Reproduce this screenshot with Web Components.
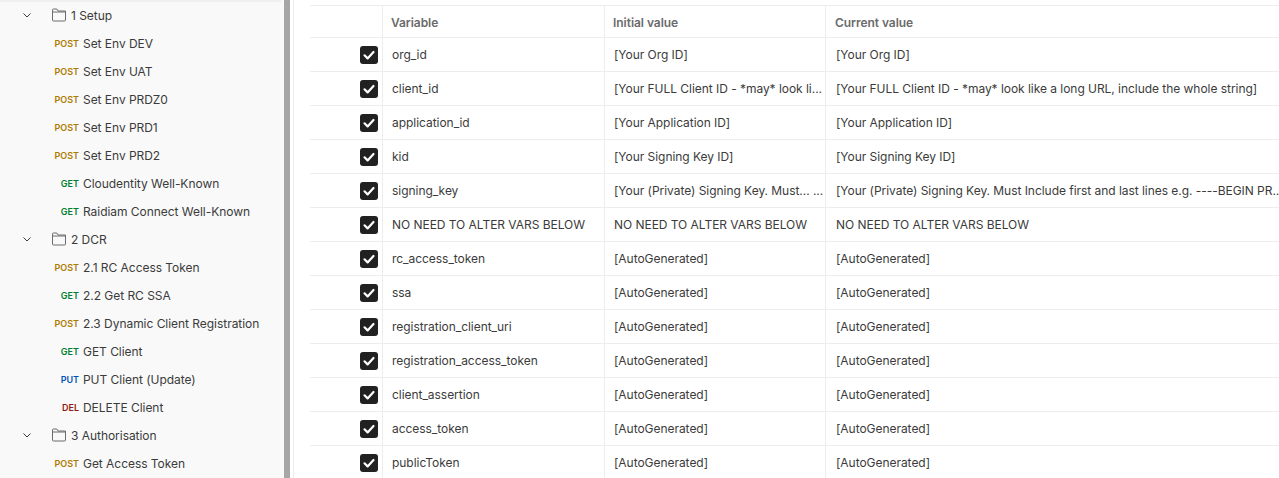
<!DOCTYPE html>
<html lang="en">
<head>
<meta charset="UTF-8">
<title>Environment</title>
<style>
  html, body { margin: 0; height: 100%; overflow: hidden; background: #fff; }
  body { font-family: Inter, "Liberation Sans", sans-serif; }
</style>
</head>
<body>
<env-page></env-page>
<script>
const sidebarItems = [
  ['folder', '1 Setup'],
  ['POST', 'Set Env DEV'],
  ['POST', 'Set Env UAT'],
  ['POST', 'Set Env PRDZ0'],
  ['POST', 'Set Env PRD1'],
  ['POST', 'Set Env PRD2'],
  ['GET', 'Cloudentity Well-Known'],
  ['GET', 'Raidiam Connect Well-Known'],
  ['folder', '2 DCR'],
  ['POST', '2.1 RC Access Token'],
  ['GET', '2.2 Get RC SSA'],
  ['POST', '2.3 Dynamic Client Registration'],
  ['GET', 'GET Client'],
  ['PUT', 'PUT Client (Update)'],
  ['DEL', 'DELETE Client'],
  ['folder', '3 Authorisation'],
  ['POST', 'Get Access Token']
];

const rows = [
  ['org_id', '[Your Org ID]', '[Your Org ID]'],
  ['client_id', '[Your FULL Client ID - *may* look li...', '[Your FULL Client ID - *may* look like a long URL, include the whole string]'],
  ['application_id', '[Your Application ID]', '[Your Application ID]'],
  ['kid', '[Your Signing Key ID]', '[Your Signing Key ID]'],
  ['signing_key', '[Your (Private) Signing Key. Must... ...', '[Your (Private) Signing Key. Must Include first and last lines e.g. ----BEGIN PR..'],
  ['NO NEED TO ALTER VARS BELOW', 'NO NEED TO ALTER VARS BELOW', 'NO NEED TO ALTER VARS BELOW'],
  ['rc_access_token', '[AutoGenerated]', '[AutoGenerated]'],
  ['ssa', '[AutoGenerated]', '[AutoGenerated]'],
  ['registration_client_uri', '[AutoGenerated]', '[AutoGenerated]'],
  ['registration_access_token', '[AutoGenerated]', '[AutoGenerated]'],
  ['client_assertion', '[AutoGenerated]', '[AutoGenerated]'],
  ['access_token', '[AutoGenerated]', '[AutoGenerated]'],
  ['publicToken', '[AutoGenerated]', '[AutoGenerated]']
];

class SideItem extends HTMLElement {
  connectedCallback() {
    const method = this.getAttribute('method');
    const colors = { POST: '#ad7a03', GET: '#007f31', PUT: '#0053b8', DEL: '#8e1a10' };
    this.attachShadow({ mode: 'open' }).innerHTML = `
      <style>
        :host { display: flex; align-items: center; height: 28px; font-size: 12px; letter-spacing: -0.04px; color: #3b3b3b; white-space: nowrap; }
        .m { width: 83px; box-sizing: border-box; padding-right: 4px; text-align: right; font-size: 9px; letter-spacing: 0; font-weight: 600; color: ${colors[method]}; }
      </style>
      <span class="m">${method}</span><slot></slot>`;
  }
}
customElements.define('side-item', SideItem);

class SideFolder extends HTMLElement {
  connectedCallback() {
    this.attachShadow({ mode: 'open' }).innerHTML = `
      <style>
        :host { display: flex; align-items: center; height: 28px; font-size: 12px; letter-spacing: -0.04px; color: #3b3b3b; white-space: nowrap; }
        svg { display: block; flex: none; }
        .chev { margin-left: 21px; }
        .dir { margin-left: 19px; margin-right: 5px; }
      </style>
      <svg class="chev" width="12" height="12" viewBox="0 0 12 12" fill="none" stroke="#3b3b3b" stroke-width="1"><path d="M2.5 4.5 6 8l3.5-3.5"/></svg>
      <svg class="dir" width="14" height="14" viewBox="0 0 14 14" fill="none" stroke="#6b6b6b" stroke-width="1"><path d="M.5 12V2A1 1 0 0 1 1.5 1h3.3l1.4 2h7.3v9a1 1 0 0 1-1 1h-11a1 1 0 0 1-1-1zM.5 4h13"/></svg>
      <slot></slot>`;
  }
}
customElements.define('side-folder', SideFolder);

class EnvSidebar extends HTMLElement {
  constructor() {
    super();
    this.attachShadow({ mode: 'open' }).innerHTML = `
      <style>
        /* the strip on top is the end of the row scrolled out of view */
        :host { display: block; flex: none; width: 284px; height: 100%; box-sizing: border-box; padding-top: 1px; overflow: hidden;
                background: #f9f9f9 linear-gradient(#f0f0f0, #f0f0f0) no-repeat 0 0 / 281px 2px; }
      </style>
      <slot></slot>`;
  }
  connectedCallback() {
    sidebarItems.forEach(([kind, label]) => {
      const el = document.createElement(kind === 'folder' ? 'side-folder' : 'side-item');
      if (kind !== 'folder') el.setAttribute('method', kind);
      el.textContent = label;
      this.appendChild(el);
    });
  }
}
customElements.define('env-sidebar', EnvSidebar);

class VarCheck extends HTMLElement {
  constructor() {
    super();
    this.attachShadow({ mode: 'open' }).innerHTML = `
      <style>
        :host { display: block; width: 18px; height: 18px; margin-top: 1px; }
        svg { display: block; }
      </style>
      <svg width="18" height="18" viewBox="0 0 18 18"><rect width="18" height="18" rx="3" fill="#212121"/><path d="M4.5 9.3 7.6 12.4 13.5 6" fill="none" stroke="#fff" stroke-width="2.2" stroke-linecap="round" stroke-linejoin="round"/></svg>`;
  }
}
customElements.define('var-check', VarCheck);

class VarRow extends HTMLElement {
  constructor() {
    super();
    this.attachShadow({ mode: 'open' }).innerHTML = `
      <style>
        :host { display: grid; grid-template-columns: 72px 222px 221px 1fr; height: 34px; border-bottom: 1px solid #ededed; box-sizing: border-box; font-size: 12px; letter-spacing: -0.04px; color: #3b3b3b; }
        div { display: flex; align-items: center; min-width: 0; box-sizing: border-box; border-left: 1px solid #ededed; padding: 0 1px 0 9px; }
        div:last-child { padding: 0 0 0 10px; }
        .box { border-left: 0; justify-content: flex-end; padding: 0 4px 0 0; }
        span { white-space: nowrap; }
      </style>
      <div class="box"><var-check></var-check></div>
      <div><span id="a"></span></div>
      <div><span id="b"></span></div>
      <div><span id="c"></span></div>`;
  }
  connectedCallback() {
    ['a', 'b', 'c'].forEach(k => {
      this.shadowRoot.getElementById(k).textContent = this.getAttribute(k);
    });
  }
}
customElements.define('var-row', VarRow);

class VarTable extends HTMLElement {
  constructor() {
    super();
    this.attachShadow({ mode: 'open' }).innerHTML = `
      <style>
        :host { display: block; flex: 1; min-width: 0; margin-left: 16px; padding-top: 5px; overflow: hidden; }
        .head { display: grid; grid-template-columns: 72px 222px 221px 1fr; height: 33px; box-sizing: border-box; border-top: 1px solid #ededed; border-bottom: 1px solid #ededed; font-size: 12px; letter-spacing: -0.04px; font-weight: 600; color: #6b6b6b; }
        .head div { display: flex; align-items: center; border-left: 1px solid #ededed; padding: 1px 8px 0; }
        .head div:first-child { border-left: 0; }
        .head div:last-child { padding-left: 9px; }
      </style>
      <div class="head"><div></div><div>Variable</div><div>Initial value</div><div>Current value</div></div>
      <slot></slot>`;
  }
  connectedCallback() {
    rows.forEach(([a, b, c]) => {
      const r = document.createElement('var-row');
      r.setAttribute('a', a);
      r.setAttribute('b', b);
      r.setAttribute('c', c);
      this.appendChild(r);
    });
  }
}
customElements.define('var-table', VarTable);

class EnvPage extends HTMLElement {
  constructor() {
    super();
    this.attachShadow({ mode: 'open' }).innerHTML = `
      <style>
        :host { display: flex; height: 478px; width: 1279px; overflow: hidden; }
        .bar { flex: none; width: 6px; background: #a6a6a6; }
        .gap { flex: none; width: 3px; background: #fff; border-right: 1px solid #ededed; }
      </style>
      <env-sidebar></env-sidebar>
      <div class="bar"></div>
      <div class="gap"></div>
      <var-table></var-table>`;
  }
}
customElements.define('env-page', EnvPage);
</script>
</body>
</html>
